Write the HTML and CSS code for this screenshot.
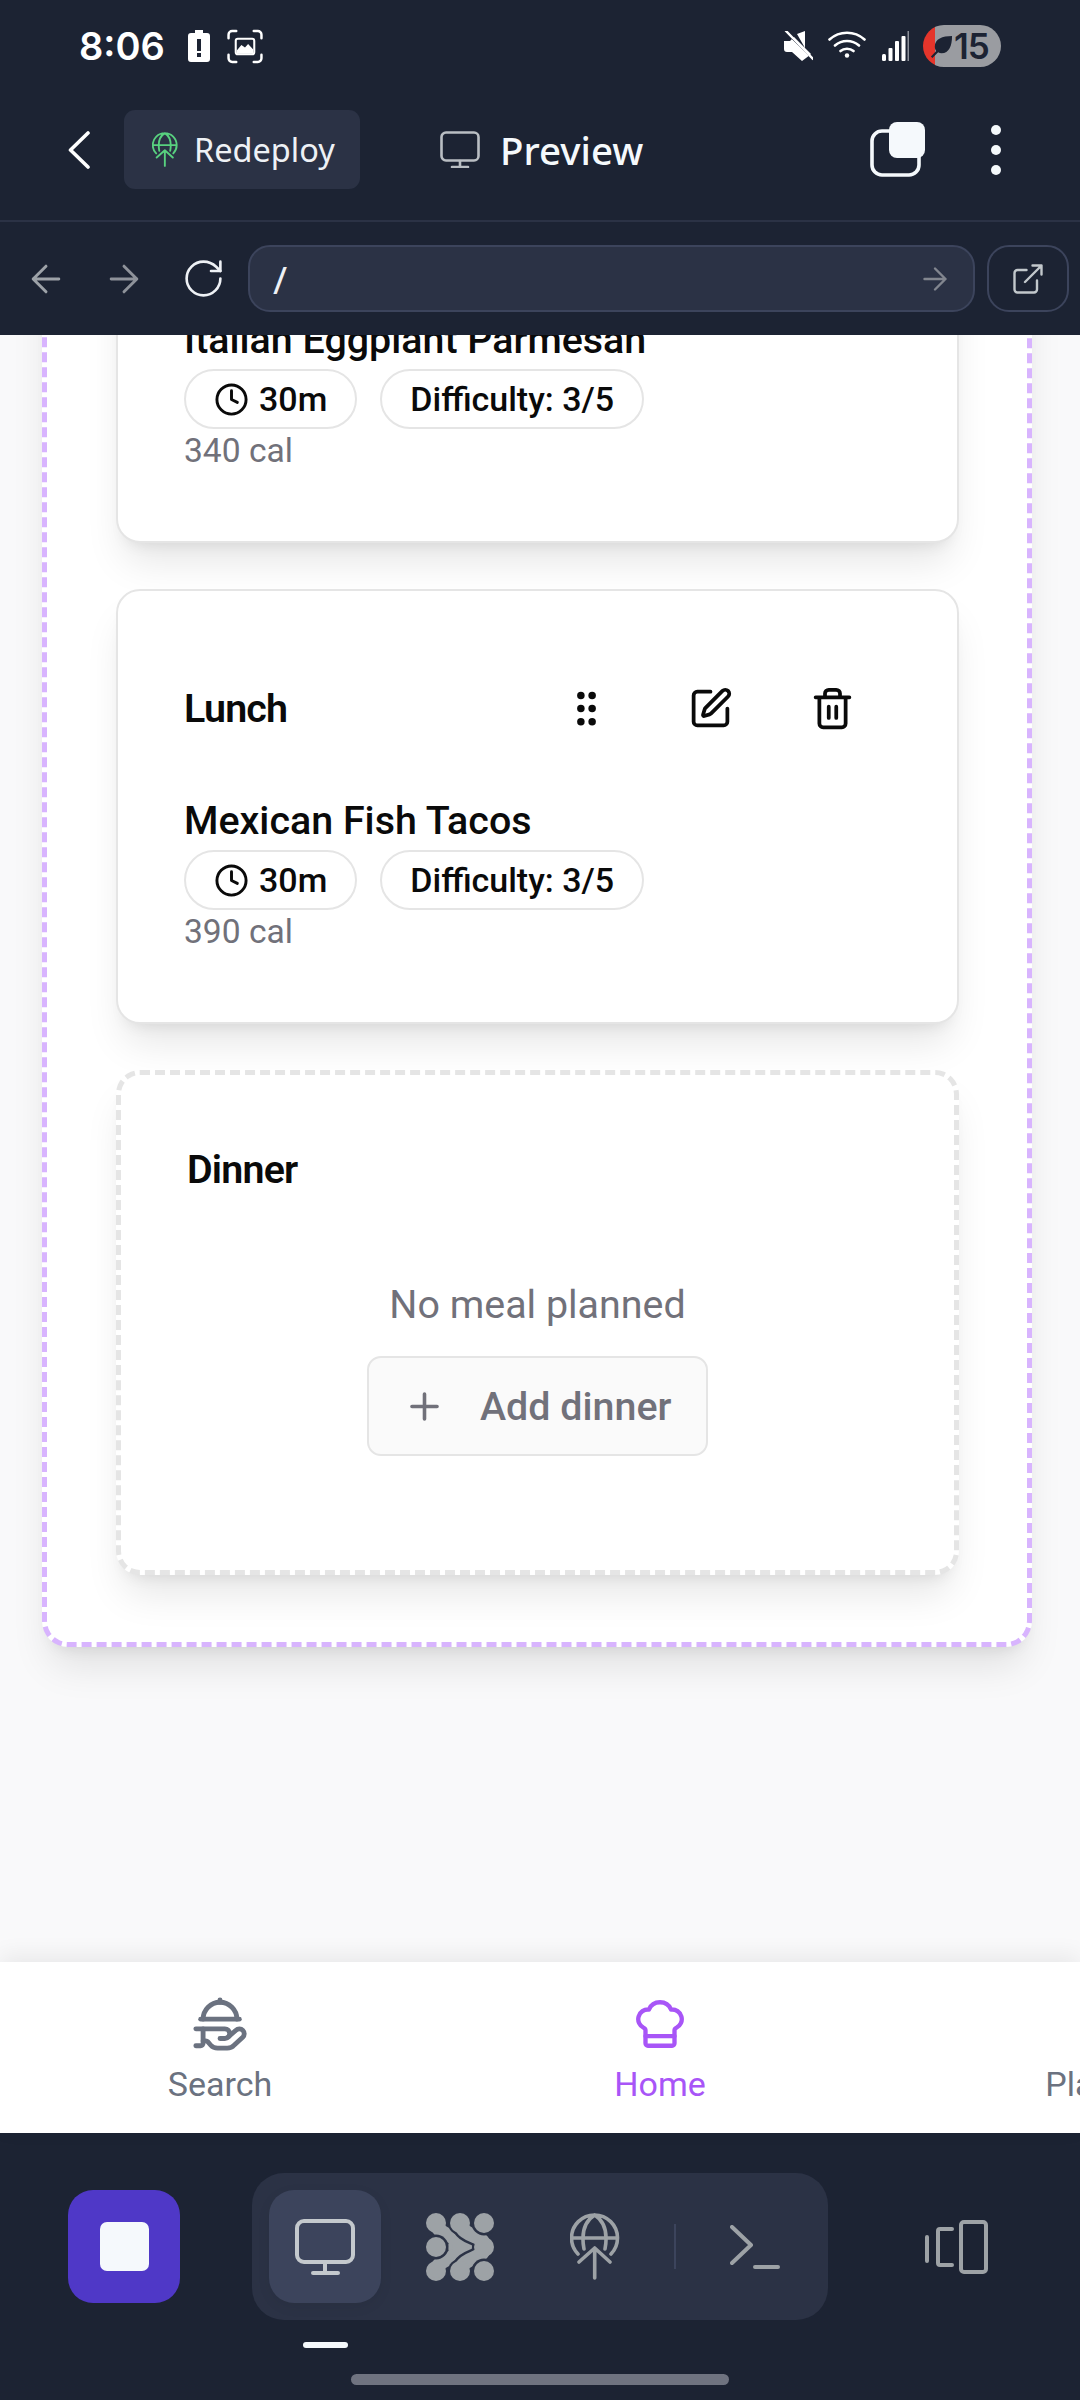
FILE: index.html
```html
<!DOCTYPE html>
<html lang="en">
<head>
  <meta charset="UTF-8">
  <meta name="viewport" content="width=device-width, initial-scale=1.0">
  <title>Preview</title>
  <link rel="stylesheet" href="styles.css">
</head>
<body>
  <div class="app">
    <!-- Dark host chrome on top -->
    <header class="chrome">
      <div class="status-bar">
        <span class="clock">8:06</span>
        <svg class="st-battery" viewBox="0 0 22 32"><path fill="#fff" fill-rule="evenodd" d="M7 0h8v3h4a3 3 0 0 1 3 3v23a3 3 0 0 1-3 3H3a3 3 0 0 1-3-3V6a3 3 0 0 1 3-3h4zM9 9v12h4V9zM9 23v4h4v-4z"/></svg>
        <svg class="st-shot" viewBox="0 0 35 34" fill="none" stroke="#fff" stroke-width="2.4" stroke-linecap="round"><path d="M9 2H5a3.500 3.500 0 0 0-3.500 3.500V9M26 2h4a3.500 3.500 0 0 1 3.500 3.500V9M9 32H5a3.500 3.500 0 0 1-3.500-3.500V25M26 32h4a3.500 3.500 0 0 0 3.500-3.500V25"/><rect x="8.500" y="9.500" width="18" height="15" rx="2" fill="#1c2333" stroke-width="2"/><path d="M9.500 24v-3l4.500-5.500 3.500 2.500 3-3.500 5 5.500V24z" fill="#fff" stroke="none"/></svg>
        <span class="status-spacer"></span>
        <svg class="st-mute" viewBox="0 0 29 30" fill="#fff"><path d="M0 10h6l4-4 17 17-1 1v0L18 30 8 21H3a3 3 0 0 1-3-3zM13 3l8-3v17z"/><path d="M2 2l26 26" stroke="#1c2333" stroke-width="1"/><path d="M2 0l27 28" stroke="#fff" stroke-width="2.400" stroke-linecap="round"/></svg>
        <svg class="st-wifi" viewBox="0 0 38 28" fill="none" stroke="#fff" stroke-width="2.600" stroke-linecap="round"><path d="M1.500 9.500c10-9 25-9 35 0M7 15.500c7-6 17-6 24 0M12.500 21c3.500-3 9.500-3 13 0"/><circle cx="19" cy="25.500" r="2.200" fill="#fff" stroke="none"/></svg>
        <svg class="st-signal" viewBox="0 0 27 30" fill="#fff"><rect x="0" y="23" width="4" height="7" rx="1.500"/><rect x="6.500" y="17" width="4" height="13" rx="1"/><rect x="13" y="10" width="4" height="20" rx="1"/><rect x="19.500" y="5" width="4" height="25" rx="1"/><rect x="25.500" y="0" width="1.500" height="30" fill="#8b8f99"/></svg>
        <div class="st-pill">
          <svg class="st-leaf" viewBox="0 0 24 24" fill="#1c2333"><path d="M23 1C13 1 5 4 5 12c0 2 .6 3.500 1.500 4.700L1 22.500l1.500 1.500 6-6c1 .7 2.300 1 3.500 1 8 0 11-8 11-18z"/></svg>
          <span>15</span>
        </div>
      </div>

      <div class="nav-row">
        <svg class="nav-back" viewBox="0 0 22 38" fill="none" stroke="#fff" stroke-width="3.600" stroke-linecap="round" stroke-linejoin="round"><path d="M20 2 2.500 19 20 36"/></svg>
        <div class="chip">
          <svg class="chip-globe" viewBox="0 0 50 67" fill="none" stroke="#58d17f" stroke-width="3.600" stroke-linecap="round" stroke-linejoin="round"><path d="M8 41A23 23 0 1 1 41 41M2 25h45M14 36c-3-16 1-28 10.700-34C34 8 38 20 35 36M24.700 35v30M9 49l15.700-14L40 49"/></svg>
          <span>Redeploy</span>
        </div>
        <svg class="nav-monitor" viewBox="0 0 40 37" fill="none" stroke="#b9bec3" stroke-width="2.600" stroke-linecap="round" stroke-linejoin="round"><rect x="1.500" y="1.500" width="37" height="28" rx="4.500"/><path d="M20 30v6M12 36h16"/></svg>
        <span class="nav-title">Preview</span>
        <span class="status-spacer"></span>
        <svg class="nav-copy" viewBox="0 0 55 55"><rect x="2" y="9" width="47" height="44" rx="10" fill="none" stroke="#f5f9fc" stroke-width="3.600"/><rect x="19" y="0" width="36" height="36" rx="8" fill="#f5f9fc"/></svg>
        <div class="nav-dots"><i></i><i></i><i></i></div>
      </div>

      <div class="url-row">
        <svg class="url-arrow" viewBox="0 0 24 24" fill="none" stroke="#9da2a8" stroke-width="1.600" stroke-linecap="round" stroke-linejoin="round"><path d="m12 19-7-7 7-7M19 12H5"/></svg>
        <svg class="url-arrow url-fwd" viewBox="0 0 24 24" fill="none" stroke="#8e929a" stroke-width="1.600" stroke-linecap="round" stroke-linejoin="round"><path d="M5 12h14M12 5l7 7-7 7"/></svg>
        <svg class="url-reload" viewBox="0 0 24 24" fill="none" stroke="#eef1f5" stroke-width="1.400" stroke-linecap="round" stroke-linejoin="round"><path d="M21 12a9 9 0 1 1-9-9c2.520 0 4.930 1 6.740 2.740L21 8"/><path d="M21 3v5h-5"/></svg>
        <div class="url-input">
          <span class="url-text">/</span>
          <svg class="url-go" viewBox="0 0 24 24" fill="none" stroke="#82868f" stroke-width="1.600" stroke-linecap="round" stroke-linejoin="round"><path d="M5 12h14M12 5l7 7-7 7"/></svg>
        </div>
        <button class="url-ext">
          <svg viewBox="0 0 24 24" fill="none" stroke="#c2c8cc" stroke-width="1.600" stroke-linecap="round" stroke-linejoin="round"><path d="M15 3h6v6M10 14 21 3M18 13v6a2 2 0 0 1-2 2H5a2 2 0 0 1-2-2V8a2 2 0 0 1 2-2h6"/></svg>
        </button>
      </div>
    </header>

    <!-- Previewed app, scrolled down -->
    <main class="viewport">
      <section class="day-panel">
        <article class="meal-card">
          <div class="meal-head">
            <h3 class="meal-type">Breakfast</h3>
          </div>
          <h4 class="meal-name">Italian Eggplant Parmesan</h4>
          <div class="pills">
            <span class="pill">
              <svg viewBox="0 0 24 24" fill="none" stroke="#0a0a0a" stroke-width="2" stroke-linecap="round" stroke-linejoin="round"><circle cx="12" cy="12" r="10"/><path d="M12 6v6l4 2"/></svg>
              30m
            </span>
            <span class="pill">Difficulty: 3/5</span>
          </div>
          <p class="meal-cal">340 cal</p>
        </article>

        <article class="meal-card">
          <div class="meal-head">
            <h3 class="meal-type">Lunch</h3>
            <div class="meal-actions">
              <svg class="act-grip" viewBox="0 0 24 24" fill="#0a0a0a"><circle cx="9" cy="5" r="2"/><circle cx="9" cy="12" r="2"/><circle cx="9" cy="19" r="2"/><circle cx="15" cy="5" r="2"/><circle cx="15" cy="12" r="2"/><circle cx="15" cy="19" r="2"/></svg>
              <svg viewBox="0 0 24 24" fill="none" stroke="#0a0a0a" stroke-width="2" stroke-linecap="round" stroke-linejoin="round"><path d="M12 3H5a2 2 0 0 0-2 2v14a2 2 0 0 0 2 2h14a2 2 0 0 0 2-2v-7"/><path d="M18.375 2.625a1 1 0 0 1 3 3l-9.013 9.014a2 2 0 0 1-.853.505l-2.873.84a.5.5 0 0 1-.62-.62l.84-2.873a2 2 0 0 1 .506-.852z"/></svg>
              <svg viewBox="0 0 24 24" fill="none" stroke="#0a0a0a" stroke-width="2" stroke-linecap="round" stroke-linejoin="round"><path d="M10 11v6M14 11v6M19 6v14a2 2 0 0 1-2 2H7a2 2 0 0 1-2-2V6M3 6h18M8 6V4a2 2 0 0 1 2-2h4a2 2 0 0 1 2 2v2"/></svg>
            </div>
          </div>
          <h4 class="meal-name">Mexican Fish Tacos</h4>
          <div class="pills">
            <span class="pill">
              <svg viewBox="0 0 24 24" fill="none" stroke="#0a0a0a" stroke-width="2" stroke-linecap="round" stroke-linejoin="round"><circle cx="12" cy="12" r="10"/><path d="M12 6v6l4 2"/></svg>
              30m
            </span>
            <span class="pill">Difficulty: 3/5</span>
          </div>
          <p class="meal-cal">390 cal</p>
        </article>

        <article class="empty-card">
          <h3 class="meal-type">Dinner</h3>
          <p class="empty-text">No meal planned</p>
          <button class="add-btn">
            <svg viewBox="0 0 24 24" fill="none" stroke="#71717a" stroke-width="2" stroke-linecap="round"><path d="M5 12h14M12 5v14"/></svg>
            Add dinner
          </button>
        </article>
      </section>
    </main>

    <nav class="tabs">
      <a class="tab">
        <svg viewBox="0 0 24 24" fill="none" stroke="currentColor" stroke-width="2" stroke-linecap="round" stroke-linejoin="round"><path d="M12 3V2"/><path d="m15.400 17.400 3.200-2.800a2 2 0 1 1 2.800 2.900l-3.600 3.300c-.7.800-1.700 1.200-2.800 1.200h-4c-1.100 0-2.100-.4-2.800-1.200l-1.302-1.464A1 1 0 0 0 6.151 19H5"/><path d="M2 14h12a2 2 0 0 1 0 4h-2"/><path d="M4 10h16"/><path d="M5 10a7 7 0 0 1 14 0"/><path d="M5 14v6a1 1 0 0 1-1 1H2"/></svg>
        <span>Search</span>
      </a>
      <a class="tab tab-active">
        <svg viewBox="0 0 24 24" fill="none" stroke="currentColor" stroke-width="1.800" stroke-linecap="round" stroke-linejoin="round"><path d="M17 21a1 1 0 0 0 1-1v-5.350c0-.457.316-.844.727-1.041a4 4 0 0 0-2.134-7.589 5 5 0 0 0-9.186 0 4 4 0 0 0-2.134 7.588c.411.198.727.585.727 1.041V20a1 1 0 0 0 1 1Z"/><path d="M6 17h12"/></svg>
        <span>Home</span>
      </a>
      <a class="tab tab-off">
        <i class="tab-icon-space"></i>
        <span>Planner</span>
      </a>
    </nav>

    <!-- Dark host toolbar on the bottom -->
    <footer class="dock">
      <div class="dock-row">
        <button class="stop-btn"><i></i></button>
        <div class="dock-panel">
          <button class="dock-active">
            <svg viewBox="0 0 60 56" fill="none" stroke="#c4c9cd" stroke-width="4" stroke-linecap="round" stroke-linejoin="round"><rect x="2" y="2" width="56" height="41" rx="7"/><path d="M30 43v11M18 54h25"/></svg>
          </button>
          <svg class="dock-logo" viewBox="0 0 68 68" fill="none" stroke-linecap="round">
            <g fill="#9da2a6">
              <circle cx="10" cy="10" r="10"/><circle cx="34" cy="34" r="12"/><circle cx="10" cy="58" r="10"/>
            </g>
            <path d="M10 10c4 16 24 10 24 24S14 42 10 58" stroke="#9da2a6" stroke-width="14"/>
            <path d="M34 10c4 16 24 10 24 24S38 42 34 58" stroke="#2b3245" stroke-width="19"/>
            <circle cx="34" cy="10" r="12" fill="#2b3245"/><circle cx="34" cy="58" r="12" fill="#2b3245"/>
            <path d="M34 10c4 16 24 10 24 24S38 42 34 58" stroke="#9da2a6" stroke-width="14"/>
            <g fill="#9da2a6">
              <circle cx="34" cy="10" r="10"/><circle cx="58" cy="34" r="10"/><circle cx="34" cy="58" r="10"/>
            </g>
            <circle cx="10" cy="34" r="12.500" fill="#2b3245"/><circle cx="58" cy="10" r="12.500" fill="#2b3245"/><circle cx="58" cy="58" r="12.500" fill="#2b3245"/>
            <g fill="#9da2a6">
              <circle cx="10" cy="34" r="10"/><circle cx="58" cy="10" r="10"/><circle cx="58" cy="58" r="10"/>
            </g>
          </svg>
          <svg class="dock-globe" viewBox="0 0 50 67" fill="none" stroke="#9da2a6" stroke-width="3.600" stroke-linecap="round" stroke-linejoin="round"><path d="M8 41A23 23 0 1 1 41 41M2 25h45M14 36c-3-16 1-28 10.700-34C34 8 38 20 35 36M24.700 35v30M9 49l15.700-14L40 49"/></svg>
          <i class="dock-divider"></i>
          <svg class="dock-term" viewBox="0 0 50 44" fill="none" stroke="#9da2a6" stroke-width="4" stroke-linecap="round" stroke-linejoin="round"><path d="M2 2l19 18L2 38M25 42h23"/></svg>
        </div>
        <svg class="dock-side" viewBox="0 0 63 54" fill="none" stroke="#9da2a6" stroke-width="4" stroke-linecap="round" stroke-linejoin="round"><rect x="36" y="2" width="25" height="50" rx="3"/><path d="M27 9H15a2 2 0 0 0-2 2v32a2 2 0 0 0 2 2h12M2 17v24"/></svg>
      </div>
      <div class="dock-mark"></div>
      <div class="home-bar"></div>
    </footer>
  </div>
</body>
</html>
```

FILE: styles.css
```css
/* General styles */
* {
  box-sizing: border-box;
}

body {
  margin: 0;
  background-color: #1c2333;
  font-family: Roboto, Arial, sans-serif;
}

button {
  font: inherit;
  border: none;
  padding: 0;
}

svg {
  display: block;
  flex: none;
}

.app {
  width: 1080px;
  height: 2400px;
  display: flex;
  flex-direction: column;
  overflow: hidden;
}

.status-spacer {
  flex: 1;
}

/* Top chrome */
.chrome {
  flex: none;
  height: 335px;
  background-color: #1c2333;
  color: #f5f9fc;
  font-family: "Noto Sans", Arial, sans-serif;
}

.status-bar {
  height: 92px;
  padding: 0 79px 0 79px;
  display: flex;
  align-items: center;
}

.clock {
  font-family: Inter, Arial, sans-serif;
  font-size: 38px;
  font-weight: 600;
  color: #fff;
  margin-right: 23px;
}

.st-battery {
  width: 22px;
  height: 32px;
  margin-right: 17px;
}

.st-shot {
  width: 36px;
  height: 35px;
}

.st-mute {
  width: 29px;
  height: 30px;
  margin-right: 15px;
}

.st-wifi {
  width: 38px;
  height: 28px;
  margin: -5px 16px 0 0;
}

.st-signal {
  width: 27px;
  height: 30px;
  margin-right: 14px;
}

.st-pill {
  width: 78px;
  height: 42px;
  border-radius: 21px;
  background: linear-gradient(to right, #e5352b 12px, #9a9ca1 12px);
  display: flex;
  align-items: center;
  padding-left: 7px;
  color: #1c2333;
  font-family: Inter, Arial, sans-serif;
  font-size: 35px;
  font-weight: 600;
  letter-spacing: -1px;
}

.st-leaf {
  width: 23px;
  height: 23px;
  margin-right: 1px;
}

.nav-row {
  height: 128px;
  padding: 18px 0 31px 68px;
  display: flex;
  align-items: center;
}

.nav-back {
  width: 22px;
  height: 38px;
  margin-right: 34px;
}

.chip {
  width: 236px;
  height: 79px;
  border-radius: 11px;
  background-color: #2b3245;
  color: #eef1f5;
  display: flex;
  align-items: center;
  gap: 16px;
  padding-left: 28px;
  font-size: 32.5px;
  margin-right: 80px;
}

.chip-globe {
  width: 26px;
  height: 35px;
}

.nav-monitor {
  width: 40px;
  height: 37px;
  margin-right: 20px;
}

.nav-title {
  font-size: 38.5px;
  font-weight: 500;
}

.nav-copy {
  width: 55px;
  height: 55px;
  margin-right: 66px;
}

.nav-dots {
  width: 10px;
  margin-right: 79px;
  display: flex;
  flex-direction: column;
  gap: 10px;
}

.nav-dots i {
  display: block;
  width: 10px;
  height: 10px;
  border-radius: 50%;
  background-color: #f5f9fc;
}

.url-row {
  height: 115px;
  border-top: 2px solid #2b3245;
  padding: 23px 11px 23px 24px;
  display: flex;
  align-items: center;
}

.url-arrow {
  width: 44px;
  height: 44px;
  margin-right: 34px;
}

.url-fwd {
  margin-right: 35px;
}

.url-reload {
  width: 45px;
  height: 45px;
  margin-right: 22px;
}

.url-input {
  flex: 1;
  height: 67px;
  border: 2px solid #3c445c;
  border-radius: 22px;
  background-color: #2b3245;
  display: flex;
  align-items: center;
  justify-content: space-between;
  padding: 0 20px 0 23px;
}

.url-text {
  font-size: 38px;
  color: #eef1f5;
}

.url-go {
  width: 36px;
  height: 36px;
}

.url-ext {
  width: 82px;
  height: 67px;
  margin-left: 12px;
  border: 2px solid #3c445c;
  border-radius: 22px;
  background-color: transparent;
  display: flex;
  align-items: center;
  justify-content: center;
}

.url-ext svg {
  width: 36px;
  height: 36px;
}

/* Preview viewport */
.viewport {
  flex: 1;
  min-height: 0;
  overflow: hidden;
  background-color: #f9f9fa;
  padding: 0 48px 0 42px;
}

.day-panel {
  margin-top: -292px;
  padding: 60px 68px 67px 69px;
  background-color: #fff;
  border: 5px dashed #d8b4fe;
  border-radius: 26px;
  box-shadow: 0 26px 39px -8px rgba(0, 0, 0, 0.1), 0 10px 16px -10px rgba(0, 0, 0, 0.1);
  display: flex;
  flex-direction: column;
  gap: 46px;
}

/* Meal cards */
.meal-card {
  height: 435px;
  padding: 95px 66px 0;
  background-color: #fff;
  border: 2px solid #e5e5e5;
  border-radius: 24px;
  box-shadow: 0 26px 39px -8px rgba(0, 0, 0, 0.1), 0 10px 16px -10px rgba(0, 0, 0, 0.1);
}

.meal-head {
  height: 45px;
  display: flex;
  align-items: center;
  justify-content: space-between;
}

.meal-type {
  margin: 0;
  font-size: 39.4px;
  line-height: 48px;
  font-weight: 600;
  letter-spacing: -0.8px;
  color: #0a0a0a;
}

.meal-actions {
  display: flex;
  gap: 77px;
  padding-right: 36px;
}

.meal-actions svg {
  width: 45px;
  height: 45px;
}

.meal-actions .act-grip {
  margin-right: 2px;
}

.meal-name {
  margin: 67px 0 0;
  font-size: 39.4px;
  line-height: 46px;
  font-weight: 500;
  color: #0a0a0a;
}

.pills {
  display: flex;
  gap: 23px;
  margin-top: 6px;
}

.pill {
  height: 60px;
  padding: 0 28px;
  border: 2px solid #e5e5e5;
  border-radius: 30px;
  display: flex;
  align-items: center;
  gap: 10px;
  font-size: 34px;
  font-weight: 500;
  color: #0a0a0a;
}

.pill svg {
  width: 35px;
  height: 35px;
}

.meal-cal {
  margin: 0;
  font-size: 33.6px;
  line-height: 44px;
  color: #71717a;
}

/* Empty slot */
.empty-card {
  height: 505px;
  padding: 71px 66px 0;
  background-color: #fff;
  border: 5px dashed #e5e5e5;
  border-radius: 24px;
  box-shadow: 0 26px 39px -8px rgba(0, 0, 0, 0.1), 0 10px 16px -10px rgba(0, 0, 0, 0.1);
  display: flex;
  flex-direction: column;
  align-items: center;
}

.empty-card .meal-type {
  align-self: flex-start;
}

.empty-text {
  margin: 85px 0 0;
  font-size: 39.4px;
  line-height: 52px;
  color: #71717a;
}

.add-btn {
  width: 341px;
  height: 100px;
  margin-top: 25px;
  padding-left: 34px;
  background-color: #fafafa;
  border: 2px solid #e5e5e5;
  border-radius: 14px;
  display: flex;
  align-items: center;
  gap: 34px;
  font-size: 39.4px;
  font-weight: 500;
  color: #71717a;
}

.add-btn svg {
  width: 43px;
  height: 43px;
}

/* Bottom tabs */
.tabs {
  flex: none;
  height: 171px;
  background-color: #fff;
  display: flex;
  overflow: hidden;
  position: relative;
  box-shadow: 0 -6px 22px rgba(0, 0, 0, 0.07);
}

.tab {
  flex: none;
  width: 440px;
  padding-top: 33px;
  display: flex;
  flex-direction: column;
  align-items: center;
  color: #6b7280;
  font-size: 34px;
  line-height: 40px;
}

.tab svg,
.tab-icon-space {
  display: block;
  width: 58px;
  height: 58px;
  margin-bottom: 11px;
}

.tab-active {
  color: #a855f7;
}

.tab-off span {
  margin-left: 6px;
}

/* Bottom dock */
.dock {
  flex: none;
  height: 267px;
  padding-top: 40px;
  background-color: #1c2333;
}

.dock-row {
  display: flex;
  align-items: center;
  padding-left: 68px;
}

.stop-btn {
  width: 112px;
  height: 113px;
  margin-right: 72px;
  border-radius: 25px;
  background-color: #4f38c7;
  display: flex;
  align-items: center;
  justify-content: center;
}

.stop-btn i {
  display: block;
  width: 49px;
  height: 49px;
  border-radius: 7px;
  background-color: #f5f9fc;
}

.dock-panel {
  width: 576px;
  height: 147px;
  padding-left: 17px;
  border-radius: 32px;
  background-color: #2b3245;
  display: flex;
  align-items: center;
  margin-right: 97px;
}

.dock-active {
  width: 112px;
  height: 113px;
  border-radius: 25px;
  background-color: #3c445c;
  box-shadow: 0 4px 14px rgba(0, 0, 0, 0.06);
  display: flex;
  align-items: center;
  justify-content: center;
  margin-right: 45px;
}

.dock-active svg {
  width: 60px;
  height: 56px;
}

.dock-logo {
  width: 68px;
  height: 68px;
  margin-right: 76px;
}

.dock-globe {
  width: 50px;
  height: 67px;
  margin-right: 54px;
}

.dock-divider {
  display: block;
  width: 2px;
  height: 45px;
  margin-right: 54px;
  background-color: #3c445c;
}

.dock-term {
  width: 50px;
  height: 44px;
}

.dock-side {
  width: 63px;
  height: 54px;
}

.dock-mark {
  width: 45px;
  height: 6px;
  margin: 22px 0 0 303px;
  border-radius: 3px;
  background-color: #f5f9fc;
}

.home-bar {
  width: 378px;
  height: 11px;
  margin: 26px auto 0;
  border-radius: 6px;
  background-color: #6f7380;
}
```
